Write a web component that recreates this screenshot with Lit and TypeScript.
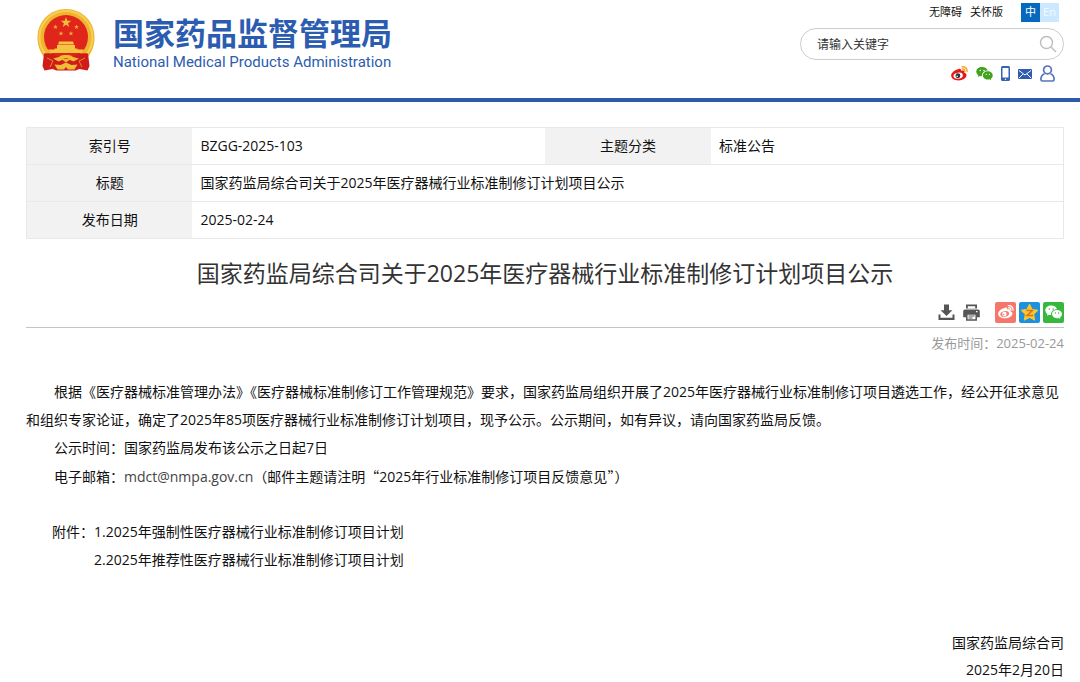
import { LitElement, html, css, svg } from "lit";
import { customElement } from "lit/decorators.js";

const starPoints = (cx: number, cy: number, r: number, inner = 0.4) =>
  Array.from({ length: 10 }, (_, i) => {
    const a = (Math.PI / 5) * i - Math.PI / 2;
    const d = i % 2 ? r * inner : r;
    return `${(cx + d * Math.cos(a)).toFixed(2)},${(cy + d * Math.sin(a)).toFixed(2)}`;
  }).join(" ");

const weiboMark = (body: string, iris: string, inner: string, wave: string) => svg`
  <path fill=${body} d="M7.6 4.600C9 3.600 10.800 4 10.600 6.200c2.600-.9 4.200-.1 3.500 1.900 1.600.4 2.500 1.500 2.300 3-.4 3-4 5.200-8.400 5.200-4.500 0-7.800-2-7.800-5.200C.2 8.200 4.300 5.200 7.600 4.600z"/>
  <ellipse cx="7.600" cy="11.300" rx="5" ry="3.200" fill=${inner} transform="rotate(-8 7.600 11.300)"/>
  <circle cx="7.300" cy="11.400" r="2.600" fill=${iris}/>
  <circle cx="6.500" cy="11.900" r=".8" fill=${inner}/>
  <path d="M12 4.300c1.700-.2 2.900.9 2.700 2.700M11.800 1.800c3.200-.3 5.500 1.900 5.200 5.100" fill="none" stroke=${wave} stroke-width="1.500" stroke-linecap="round"/>`;

const wechatMark = (fill: string, eye: string) => svg`
  <path fill=${fill} d="M6.500 2C2.900 2 .3 4.200.3 7c0 1.600.8 3 2.200 3.900L2 12.700l2.200-1.100c.7.200 1.400.3 2.100.300C6 8.300 8.800 5.900 12.500 5.900 11.900 3.500 9.500 2 6.500 2z"/>
  <path fill=${fill} d="M17.700 11c0-2.400-2.300-4.300-5.200-4.300S7.300 8.600 7.300 11s2.300 4.300 5.200 4.300c.6 0 1.200-.1 1.700-.2l1.900 1-.5-1.600c1.300-.8 2.100-2.100 2.100-3.500z"/>
  <g fill=${eye}><circle cx="4.500" cy="5.700" r=".8"/><circle cx="8.500" cy="5.700" r=".8"/><circle cx="10.900" cy="9.900" r=".7"/><circle cx="14.200" cy="9.900" r=".7"/></g>`;

const emblem = html`
  <svg class="emblem" viewBox="0 0 58 62" aria-hidden="true">
    <path fill="#eeb52f" d="M29 0C44.500 0 57.500 12 57.500 28.500 57.500 38 54 46 47 52l-9 3H20l-9-3C4 46 .5 38 .5 28.500.5 12 13.500 0 29 0z"/>
    <path fill="none" stroke="#f7cf55" stroke-width="2" d="M10 47C-1 35 .5 18 12 8c10-8 24-8 34 0 11.500 10 13 27 2 39"/>
    <circle cx="29" cy="28" r="22" fill="#e0251b"/>
    <polygon fill="#f3bd3a" points=${starPoints(29, 13.500, 5.500)}/>
    <g fill="#edb036">
      <polygon points=${starPoints(18.500, 18, 2.600)}/><polygon points=${starPoints(39.500, 18, 2.600)}/>
      <polygon points=${starPoints(24, 24.500, 2.600)}/><polygon points=${starPoints(34, 24.500, 2.600)}/>
    </g>
    <path fill="#f5c442" d="M22 32.500h14l1 3H21zM20 36h18v3.500h2.500v1H47L44.500 44h-31L11 40.500h6.500v-1H20z"/>
    <path fill="#cf1c1a" d="M7 44.500c6-1 11 0 15 4l7 5 7-5c4-4 9-5 15-4L52.500 57l-2 4.500-8-1.500-4 1.500h-19L15.500 60l-8 1.500-2-4.500z"/>
    <path fill="#f2bb38" d="M22 48c2-2 4.500-2 7-2s5 0 7 2l6 1.500-5.500 3-3.500-1.500c-1-2.500-7-2.500-8 0L21.500 52.500 16 49.500zM17.500 55.500l6 .5 5.500-2.500 5.500 2.500 6-.5-3 5H31l-2-2.500-2 2.500h-6.500z"/>
    <path fill="none" stroke="#e98a28" d="m10 49 6 3-3 6M48 49l-6 3 3 6"/>
  </svg>`;

@customElement("app-root")
export class AppRoot extends LitElement {
  static styles = css`
    :host {
      display: block;
      background: #fff;
      color: #111;
      font: 14px/28px "Open Sans", "Noto Sans CJK SC", sans-serif;
    }
    * { box-sizing: border-box; }
    a { color: inherit; text-decoration: none; }
    svg { display: block; }
    button { border: 0; padding: 0; background: none; font: inherit; color: inherit; cursor: pointer; }
    .header {
      display: flex;
      justify-content: space-between;
      align-items: flex-start;
      height: 102px;
      padding: 0 16px 0 37px;
      border-bottom: 4px solid #2d5bb0;
    }
    .brand { display: flex; gap: 18px; padding-top: 9px; color: #2c5cb0; }
    .emblem { width: 58px; height: 62px; }
    .brand-text { display: flex; flex-direction: column; padding-top: 5px; }
    .brand-cn { font: 700 31px/36px "Noto Sans CJK SC", sans-serif; }
    .brand-en { font: 400 15px/24px Roboto, sans-serif; }
    .tools { width: 264px; display: flex; flex-direction: column; }
    .quick { display: flex; justify-content: flex-end; align-items: center; height: 28px; padding: 0 5px 4px 0; font-size: 11px; gap: 8px; line-height: 18px; }
    .langs { display: flex; margin-left: 10px; }
    .lang { width: 19px; height: 19px; background: #cbe8ff; color: #f4fbff; text-align: center; line-height: 18px; }
    .lang.current { background: #0769bd; color: #fff; }
    .search { display: flex; align-items: center; height: 32px; border: 1px solid #ccc; border-radius: 16px; padding: 0 6px 0 16px; }
    .search-input { flex: 1; min-width: 0; border: 0; outline: 0; padding: 2px 0 0; background: none; font: 12px/20px "Open Sans", "Noto Sans CJK SC", sans-serif; color: #333; }
    .search-input::placeholder { color: #333; opacity: 1; }
    .social { display: flex; justify-content: flex-end; align-items: center; gap: 8px; padding: 5px 9px 0 0; }
    .main { padding: 25px 16px 0 26px; }
    .meta { width: 100%; border-collapse: collapse; table-layout: fixed; border: 1px solid #e8e8e8; }
    .meta th, .meta td { height: 37px; padding: 0 8px; line-height: 20px; border-bottom: 1px solid #e8e8e8; text-align: left; font-weight: 400; }
    .meta th { background: #f2f2f2; text-align: center; }
    .label-col { width: 16%; }
    .title { margin: 17px 0 0; text-align: center; font-size: 23px; line-height: 34px; font-weight: 400; color: #333; }
    .actions { display: flex; justify-content: flex-end; align-items: center; gap: 3px; height: 38px; padding-top: 8px; border-bottom: 1px solid #c4c4c4; }
    .plain { display: flex; gap: 8px; margin-right: 12px; }
    .published { margin: 0; text-align: right; color: #999; font-size: 13px; line-height: 30px; }
    .article { margin-top: 20px; }
    .para { margin: 0; text-indent: 28px; }
    .mail { color: #444; }
    .quote { font-family: "Noto Sans CJK SC", sans-serif; }
    .attachments { display: flex; margin-top: 27px; padding-left: 26px; }
    .list { margin: 0; padding: 0; list-style: none; }
    .sign { margin: 55px 0 0; text-align: right; line-height: 27px; }
    .sign-line { display: block; }
  `;

  render() {
    return html`
      <header class="header">
        <a class="brand" href="#" aria-label="国家药品监督管理局">
          ${emblem}
          <span class="brand-text">
            <span class="brand-cn">国家药品监督管理局</span>
            <span class="brand-en">National Medical Products Administration</span>
          </span>
        </a>
        <div class="tools">
          <nav class="quick">
            <a href="#">无障碍</a><a href="#">关怀版</a>
            <span class="langs"><a class="lang current" href="#">中</a><a class="lang" href="#">En</a></span>
          </nav>
          <form class="search">
            <input class="search-input" type="text" placeholder="请输入关键字" aria-label="请输入关键字" />
            <button type="button" aria-label="搜索">
              <svg width="18" height="18" viewBox="0 0 18 18" fill="none" stroke="#bfbfbf" stroke-width="1.500"><circle cx="7.500" cy="7.500" r="6"/><path d="m12 12 5 5"/></svg>
            </button>
          </form>
          <nav class="social">
            <a href="#" aria-label="微博"><svg width="17" height="17" viewBox="0 0 18 18">${weiboMark("#e6161b", "#333", "#fff", "#f5a623")}</svg></a>
            <a href="#" aria-label="微信"><svg width="17" height="17" viewBox="0 0 18 18">${wechatMark("#3fa31c", "#fff")}</svg></a>
            <a href="#" aria-label="移动端"><svg width="9" height="15" viewBox="0 0 9 15"><rect width="9" height="15" rx="1.500" fill="#3464b4"/><path fill="#fff" d="M1.500 2h6v9.500h-6z"/><circle cx="4.500" cy="13.200" r=".7" fill="#fff"/></svg></a>
            <a href="#" aria-label="邮箱"><svg width="14" height="10" viewBox="0 0 14 10"><rect width="14" height="10" rx="1" fill="#2f5cae"/><path fill="none" stroke="#fff" d="m1 1.500 6 4.500 6-4.500M1 9l4-4M13 9 9 5"/></svg></a>
            <a href="#" aria-label="用户"><svg width="15" height="17" viewBox="0 0 15 17" fill="none" stroke="#5674bb" stroke-width="1.700"><circle cx="7.500" cy="4.900" r="3.900"/><path stroke-linejoin="round" d="M4.500 8.800C2 9.800.9 12 .9 14.500q0 1.500 1.500 1.500h10.200q1.500 0 1.500-1.500c0-2.500-1.100-4.700-3.600-5.700"/></svg></a>
          </nav>
        </div>
      </header>
      <main class="main">
        <table class="meta">
          <colgroup><col class="label-col" /><col /><col class="label-col" /><col /></colgroup>
          <tbody>
            <tr><th scope="row">索引号</th><td>BZGG-2025-103</td><th scope="row">主题分类</th><td>标准公告</td></tr>
            <tr><th scope="row">标题</th><td colspan="3">国家药监局综合司关于2025年医疗器械行业标准制修订计划项目公示</td></tr>
            <tr><th scope="row">发布日期</th><td colspan="3">2025-02-24</td></tr>
          </tbody>
        </table>
        <h1 class="title">国家药监局综合司关于2025年医疗器械行业标准制修订计划项目公示</h1>
        <div class="actions">
          <span class="plain">
            <button type="button" aria-label="下载"><svg width="17" height="17" viewBox="0 0 17 17" fill="#555"><path d="M6 .5h5v5.700h3.400L8.500 12 2.600 6.200H6z"/><path d="M.5 10.500h2v3.300h12v-3.300h2V16H.5z"/></svg></button>
            <button type="button" aria-label="打印"><svg width="17" height="17" viewBox="0 0 17 17"><path fill="#555" d="M3 .5h11v4H3zM2 5.500h13a1.800 1.800 0 0 1 1.800 1.800v6H14V10H3v3.300H.2v-6A1.800 1.800 0 0 1 2 5.500z"/><path fill="#fff" d="M4.800 2.200h7.400v2.300H4.800zM13 7h1.500v1.300H13z"/><path fill="#fff" stroke="#555" stroke-width="1.500" d="M3.800 10h9.400v6H3.800z"/><path stroke="#555" d="M5.500 12h6M5.500 14h4"/></svg></button>
          </span>
          <button type="button" aria-label="分享到微博"><svg width="21" height="21" viewBox="0 0 21 21"><rect width="21" height="21" rx="2" fill="#f5776b"/><g transform="translate(3 2) scale(.88)">${weiboMark("#fff", "#fff", "#f5776b", "#fff")}</g></svg></button>
          <button type="button" aria-label="分享到QQ空间"><svg width="21" height="21" viewBox="0 0 21 21"><rect width="21" height="21" rx="2" fill="#1b91e0"/><polygon fill="#fdc42c" stroke="#fdc42c" stroke-linejoin="round" points=${starPoints(10.500, 11, 8.900, 0.500)}/><path fill="none" stroke="#d9761a" stroke-width="1.500" d="M7.300 8.500h6l-5.300 5h6"/></svg></button>
          <button type="button" aria-label="分享到微信"><svg width="21" height="21" viewBox="0 0 21 21"><rect width="21" height="21" rx="2" fill="#36b83c"/><g transform="translate(2 1.500) scale(.96)">${wechatMark("#fff", "#36b83c")}</g></svg></button>
        </div>
        <p class="published">发布时间：2025-02-24</p>
        <article class="article">
          <p class="para">根据《医疗器械标准管理办法》《医疗器械标准制修订工作管理规范》要求，国家药监局组织开展了2025年医疗器械行业标准制修订项目遴选工作，经公开征求意见和组织专家论证，确定了2025年85项医疗器械行业标准制修订计划项目，现予公示。公示期间，如有异议，请向国家药监局反馈。</p>
          <p class="para">公示时间：国家药监局发布该公示之日起7日</p>
          <p class="para">电子邮箱：<a class="mail" href="mailto:mdct@nmpa.gov.cn">mdct@nmpa.gov.cn</a>（邮件主题请注明<span class="quote">“</span>2025年行业标准制修订项目反馈意见<span class="quote">”</span>）</p>
          <div class="attachments">
            <span>附件：</span>
            <ul class="list">
              <li><a href="#">1.2025年强制性医疗器械行业标准制修订项目计划</a></li>
              <li><a href="#">2.2025年推荐性医疗器械行业标准制修订项目计划</a></li>
            </ul>
          </div>
          <p class="sign"><span class="sign-line">国家药监局综合司</span><span class="sign-line">2025年2月20日</span></p>
        </article>
      </main>
    `;
  }
}
